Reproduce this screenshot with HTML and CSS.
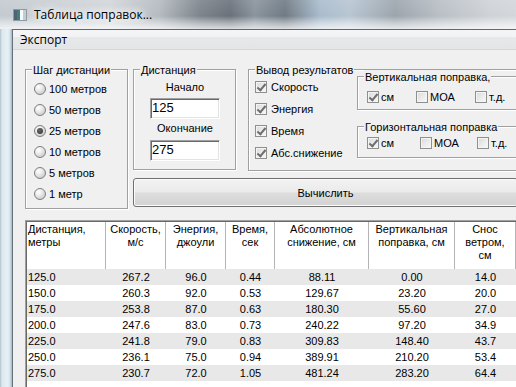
FILE: index.html
```html
<!DOCTYPE html>
<html lang="ru">
<head>
<meta charset="utf-8">
<title>Таблица поправок...</title>
<link rel="stylesheet" href="styles.css">
</head>
<body>
<div class="window">
  <div class="titlebar">
    <svg class="app-icon" width="14" height="12" viewBox="0 0 14 12">
      <rect x="0.5" y="0.5" width="13" height="11" fill="#f7f9fa" stroke="#8d99a3"/>
      <rect x="1" y="1" width="3" height="10" fill="#4d6472"/>
      <rect x="4" y="1" width="3" height="10" fill="#3f7f7a"/>
      <rect x="10" y="1" width="3" height="10" fill="#c3ccd3"/>
    </svg>
    <span class="title">Таблица поправок...</span>
  </div>
  <div class="frame">
    <div class="frame-left"></div>
    <div class="client">
      <div class="menubar"><span class="menu-item">Экспорт</span></div>
      <div class="content">
        <div class="top">
          <div class="group g-step">
            <div class="gtitle">Шаг дистанции</div>
            <div class="radios">
              <div class="radio"><span class="rb"></span>100 метров</div>
              <div class="radio"><span class="rb"></span>50 метров</div>
              <div class="radio"><span class="rb on"></span>25 метров</div>
              <div class="radio"><span class="rb"></span>10 метров</div>
              <div class="radio"><span class="rb"></span>5 метров</div>
              <div class="radio"><span class="rb"></span>1 метр</div>
            </div>
          </div>
          <div class="right">
            <div class="groups-row">
              <div class="group g-dist">
                <div class="gtitle">Дистанция</div>
                <div class="dist-body">
                  <div class="flabel first">Начало</div>
                  <div class="tb">125</div>
                  <div class="flabel second">Окончание</div>
                  <div class="tb tb2">275</div>
                </div>
              </div>
              <div class="group g-out">
                <div class="gtitle out-title">Вывод результатов</div>
                <div class="out-body">
                  <div class="out-left">
                    <div class="chk"><span class="cb on"></span>Скорость</div>
                    <div class="chk"><span class="cb on"></span>Энергия</div>
                    <div class="chk"><span class="cb on"></span>Время</div>
                    <div class="chk"><span class="cb on"></span>Абс.снижение</div>
                  </div>
                  <div class="out-right">
                    <div class="group sub sub-v">
                      <div class="gtitle">Вертикальная поправка,</div>
                      <div class="sub-row">
                        <div class="schk"><span class="cb on"></span>см</div>
                        <div class="schk"><span class="cb"></span>МОА</div>
                        <div class="schk"><span class="cb"></span>т.д.</div>
                      </div>
                    </div>
                    <div class="group sub sub-h">
                      <div class="gtitle">Горизонтальная поправка</div>
                      <div class="sub-row">
                        <div class="schk"><span class="cb on"></span>см</div>
                        <div class="schk"><span class="cb"></span>МОА</div>
                        <div class="schk"><span class="cb"></span>т.д.</div>
                      </div>
                    </div>
                  </div>
                </div>
              </div>
            </div>
            <div class="calc">Вычислить</div>
          </div>
        </div>
        <div class="list">
          <div class="list-inner">
            <div class="lv-head">
              <div class="hc first">Дистанция,<br>метры</div>
              <div class="hc">Скорость,<br>м/с</div>
              <div class="hc">Энергия,<br>джоули</div>
              <div class="hc">Время,<br>сек</div>
              <div class="hc">Абсолютное<br>снижение, см</div>
              <div class="hc">Вертикальная<br>поправка, см</div>
              <div class="hc">Снос<br>ветром,<br>см</div>
              <div class="hc fill"></div>
            </div>
            <div class="lv-row"><span class="c1">125.0</span><span>267.2</span><span>96.0</span><span>0.44</span><span>88.11</span><span>0.00</span><span>14.0</span><span></span></div>
            <div class="lv-row"><span class="c1">150.0</span><span>260.3</span><span>92.0</span><span>0.53</span><span>129.67</span><span>23.20</span><span>20.0</span><span></span></div>
            <div class="lv-row"><span class="c1">175.0</span><span>253.8</span><span>87.0</span><span>0.63</span><span>180.30</span><span>55.60</span><span>27.0</span><span></span></div>
            <div class="lv-row"><span class="c1">200.0</span><span>247.6</span><span>83.0</span><span>0.73</span><span>240.22</span><span>97.20</span><span>34.9</span><span></span></div>
            <div class="lv-row"><span class="c1">225.0</span><span>241.8</span><span>79.0</span><span>0.83</span><span>309.83</span><span>148.40</span><span>43.7</span><span></span></div>
            <div class="lv-row"><span class="c1">250.0</span><span>236.1</span><span>75.0</span><span>0.94</span><span>389.91</span><span>210.20</span><span>53.4</span><span></span></div>
            <div class="lv-row"><span class="c1">275.0</span><span>230.7</span><span>72.0</span><span>1.05</span><span>481.24</span><span>283.20</span><span>64.4</span><span></span></div>
          </div>
        </div>
      </div>
    </div>
  </div>
</div>
</body>
</html>
```

FILE: styles.css
```css
* { box-sizing: border-box; }
html, body { margin: 0; padding: 0; }
body {
  width: 516px;
  height: 387px;
  overflow: hidden;
  background: #f0f0f0;
  font-family: "Liberation Sans", Arial, sans-serif;
  font-size: 11px;
  color: #000;
}
.window {
  width: 530px;
  height: 387px;
  display: flex;
  flex-direction: column;
  overflow: hidden;
}

/* ---- title bar (aero glass) ---- */
.titlebar {
  height: 29px;
  flex: none;
  display: flex;
  align-items: center;
  background:
    linear-gradient(to bottom, rgba(255,255,255,0.10) 0%, rgba(255,255,255,0) 55%, rgba(255,255,255,0.45) 80%, rgba(255,255,255,0.75) 100%),
    linear-gradient(to right, #c4cad0 0px, #d2d6da 110px, #b4bac0 160px, #7c848c 200px, #69717a 230px, #8a949e 255px, #707a84 285px, #a9bccd 320px, #b8c6d2 350px, #9ca5ad 395px, #b9bfc5 440px, #cfd3d7 490px, #d6d9dc 530px);
}
.app-icon { margin-left: 13px; flex: none; }
.title {
  margin-left: 7px;
  font-family: "Open Sans", "Noto Sans", sans-serif;
  font-size: 12px;
  color: #000;
  text-shadow: 0 0 6px #fff, 0 0 10px #fff, 0 0 14px #fff, 0 0 14px #fff;
}

/* ---- frame ---- */
.frame { flex: 1; display: flex; min-height: 0; }
.frame-left {
  width: 12px;
  flex: none;
  background: linear-gradient(to right, #b3c0c8 0, #dceaf0 2px, #e4f2f6 8px, #d3e1e8 10px, #a7b3bb 12px);
}
.client {
  width: 518px;
  flex: none;
  border-top: 1px solid #5d6973;
  border-left: 1px solid #66727b;
  background: #f0f0f0;
  display: flex;
  flex-direction: column;
}
.menubar {
  height: 20px;
  flex: none;
  border-bottom: 1px solid #d6d6d8;
  background: linear-gradient(to bottom, #f5f5f7 0, #f2f3f5 35%, #e7e8ea 38%, #e4e5e7 100%);
  padding-left: 7px;
  display: flex;
  align-items: center;
}
.menu-item {
  font-family: "Open Sans", "Noto Sans", sans-serif;
  font-size: 12px;
  line-height: 16px;
  padding-top: 1px;
}

.content { padding: 19px 12px 0 12px; flex: 1; }

.top { display: flex; align-items: flex-start; height: 140px; }

/* ---- group box ---- */
.group {
  border: 1px solid #a0a0a0;
  box-shadow: inset 1px 1px 0 #fff, 1px 1px 0 #fff;
}
.gtitle {
  width: max-content;
  margin: -7px 0 0 6px;
  padding: 0 1px;
  line-height: 14px;
  background: #f0f0f0;
}

.g-step { width: 103px; height: 140px; flex: none; }
.radios { padding-top: 1px; }
.radio {
  height: 21px;
  display: flex;
  align-items: center;
  padding-left: 8px;
  gap: 3px;
}
.rb {
  width: 12px;
  height: 12px;
  border-radius: 50%;
  border: 1px solid #7f7f7f;
  background: radial-gradient(circle at 35% 30%, #ffffff 0, #ececec 35%, #bdbdbd 100%);
  display: flex;
  align-items: center;
  justify-content: center;
  flex: none;
}
.rb.on::after {
  content: "";
  width: 6px;
  height: 6px;
  border-radius: 50%;
  background: radial-gradient(circle at 40% 35%, #6a6a6a 0, #2e2e2e 100%);
}

.right { margin-left: 5px; flex: 1; }
.groups-row { display: flex; align-items: flex-start; }

.g-dist { width: 103px; height: 101px; flex: none; }
.dist-body { padding-left: 16px; width: 86px; }
.flabel { width: 70px; text-align: center; line-height: 16px; }
.flabel.first { margin-top: 2px; }
.flabel.second { margin-top: 1px; }
.tb {
  width: 70px;
  height: 21px;
  margin-top: 3px;
  background: #fff;
  border: 1px solid;
  border-color: #a0a0a0 #ffffff #ffffff #a0a0a0;
  box-shadow: inset 1px 1px 0 #696969, inset -1px -1px 0 #e3e3e3;
  padding-left: 1px;
  font-size: 13px;
  line-height: 17px;
}
.tb.tb2 { margin-top: 4px; }

.g-out { margin-left: 12px; flex: 1; height: 102px; }
.out-title { margin-bottom: -1px; }
.out-body { display: flex; }
.out-left { width: 108px; flex: none; padding-left: 6px; }
.chk {
  height: 22px;
  display: flex;
  align-items: center;
  gap: 4px;
}
.cb {
  width: 12px;
  height: 12px;
  flex: none;
  border: 1px solid #8e8f8f;
  background: linear-gradient(135deg, #d9d9d9 0%, #ececec 55%, #f8f8f8 100%);
  box-shadow: inset 0 0 0 1px #f4f4f4;
  display: flex;
  align-items: center;
  justify-content: center;
}
.cb.on::after {
  content: "";
  width: 3px;
  height: 7px;
  margin-top: -2px;
  border-right: 2px solid #6e6e6e;
  border-bottom: 2px solid #6e6e6e;
  transform: rotate(40deg);
}
.out-right { flex: 1; }
.sub-row {
  display: grid;
  align-items: center;
  padding-left: 9px;
}
.schk { display: flex; align-items: center; gap: 2px; }
.sub-v .sub-row {
  grid-template-columns: 49px 59px auto;
  height: 20px;
  margin-top: 3px;
  margin-bottom: 2px;
}
.sub-h { margin-top: 16px; }
.sub-h .sub-row {
  grid-template-columns: 53px 57px auto;
  height: 18px;
  margin-bottom: 5px;
}

.calc {
  margin-top: 7px;
  height: 29px;
  border: 1px solid #707070;
  border-radius: 3px;
  background: linear-gradient(to bottom, #f2f2f2 0%, #ebebeb 48%, #dddddd 52%, #d2d2d2 100%);
  box-shadow: inset 0 0 0 1px #fbfbfb;
  display: flex;
  align-items: center;
  justify-content: center;
}

/* ---- list view ---- */
.list {
  margin-top: 11px;
  height: 200px;
  border-top: 1px solid #a0a0a0;
  border-left: 1px solid #a0a0a0;
  background: #fff;
}
.list-inner {
  height: 100%;
  border-top: 1px solid #696969;
  border-left: 1px solid #696969;
}
.lv-head, .lv-row {
  display: grid;
  grid-template-columns: 79px 60px 60px 49px 94px 86px 61px 1fr;
}
.lv-head { height: 47px; background: #fff; }
.hc {
  border-right: 1px solid #b4b4b4;
  text-align: center;
  line-height: 13px;
  padding-top: 1px;
}
.hc.first { text-align: left; padding-left: 1px; }
.hc.fill { border-right: 0; }
.lv-row { height: 16px; line-height: 16px; }
.lv-row:nth-child(even) { background: #e8e8e8; }
.lv-row span { text-align: center; white-space: nowrap; }
.lv-row span.c1 { text-align: left; padding-left: 1px; }
```
